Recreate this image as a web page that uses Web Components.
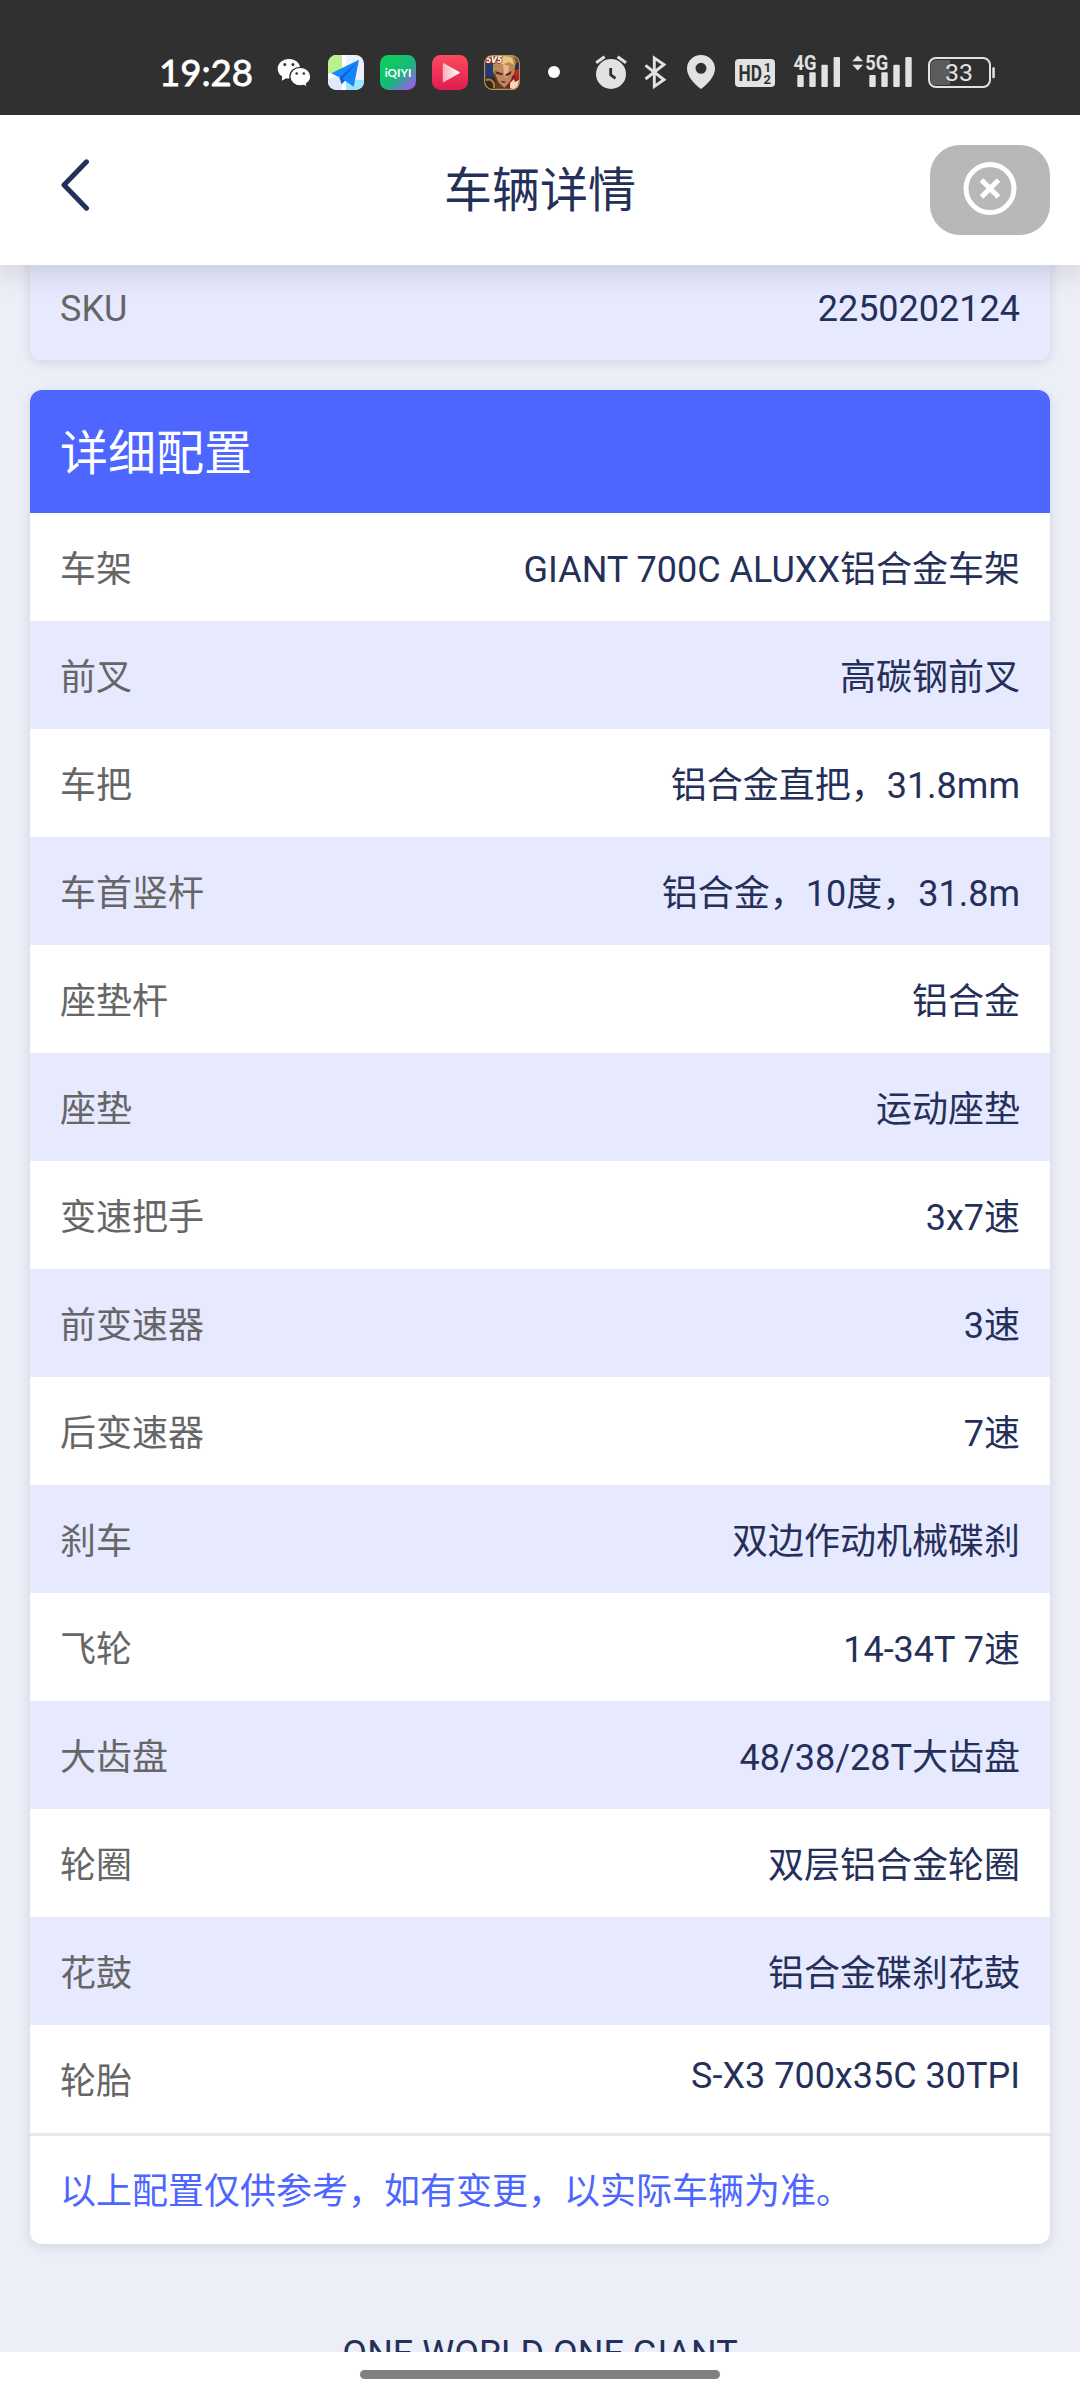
<!DOCTYPE html>
<html lang="zh-CN">
<head>
<meta charset="utf-8">
<title>车辆详情</title>
<style>
  html, body { margin: 0; padding: 0; }
  body { width: 1080px; height: 2400px; overflow: hidden; background: #fff;
         font-family: Roboto, 'Noto Sans CJK SC', sans-serif; }
</style>
</head>
<body>
<bike-page>
  <status-bar slot="status" time="19:28" battery="33"></status-bar>
  <nav-header slot="header">车辆详情</nav-header>

  <info-card class="first">
    <spec-row label="SKU" odd>2250202124</spec-row>
  </info-card>

  <info-card heading="详细配置">
    <spec-row label="车架">GIANT 700C ALUXX铝合金车架</spec-row>
    <spec-row label="前叉" odd>高碳钢前叉</spec-row>
    <spec-row label="车把">铝合金直把，31.8mm</spec-row>
    <spec-row label="车首竖杆" odd>铝合金，10度，31.8m</spec-row>
    <spec-row label="座垫杆">铝合金</spec-row>
    <spec-row label="座垫" odd>运动座垫</spec-row>
    <spec-row label="变速把手">3x7速</spec-row>
    <spec-row label="前变速器" odd>3速</spec-row>
    <spec-row label="后变速器">7速</spec-row>
    <spec-row label="刹车" odd>双边作动机械碟刹</spec-row>
    <spec-row label="飞轮">14-34T 7速</spec-row>
    <spec-row label="大齿盘" odd>48/38/28T大齿盘</spec-row>
    <spec-row label="轮圈">双层铝合金轮圈</spec-row>
    <spec-row label="花鼓" odd>铝合金碟刹花鼓</spec-row>
    <spec-row label="轮胎" latin>S-X3 700x35C 30TPI</spec-row>
    <span slot="note">以上配置仅供参考，如有变更，以实际车辆为准。</span>
  </info-card>

  <span slot="slogan">ONE WORLD ONE GIANT</span>
</bike-page>

<script>
// Page frame: status bar, header, clipped scroll area, gesture bar.
class BikePage extends HTMLElement {
  connectedCallback() {
    this.attachShadow({ mode: 'open' }).innerHTML = `
      <style>
        :host { display: flex; flex-direction: column; width: 1080px; height: 2400px; }
        main { flex: 1; min-height: 0; overflow: hidden; background: #eceff8;
               display: flex; flex-direction: column; gap: 30px; padding: 0 30px; }
        ::slotted(.first) { margin-top: -13px; }
        .slogan { margin-top: 59px; text-align: center; font-size: 36px; line-height: 42px;
                  color: #25305a; white-space: nowrap; }
        footer { height: 48px; flex: none; display: flex; justify-content: center; background: #fff; }
        footer i { width: 360px; height: 9px; margin-top: 18px; border-radius: 5px; background: #808080; }
      </style>
      <slot name="status"></slot>
      <slot name="header"></slot>
      <main>
        <slot></slot>
        <div class="slogan"><slot name="slogan"></slot></div>
      </main>
      <footer><i></i></footer>`;
  }
}

// Each icon: width, gap before it, and its drawing (all are 36px tall).
const ICONS = [
  { w: 34, gap: 24, svg: `
    <path fill="#fff" d="M12 4C5.600 4 .7 8.300 .7 13.800c0 3.200 1.700 5.900 4.500 7.700L4.800 25.800l4.500-2.500c4.500 1 14-1.500 14-9.500C23.300 8.300 18.400 4 12 4z"/>
    <path fill="#fff" stroke="#303030" stroke-width="1.300" d="M23.300 12.400c-5.800 0-10.400 4-10.400 9.200s4.600 9.300 10.400 9.300c1.200 0 2.400-.2 3.500-.5l3.500 2-.8-3.600c2.600-1.700 4.300-4.200 4.300-7.200 0-5.200-4.700-9.200-10.500-9.200z"/>
    <g fill="#303030"><circle cx="7.800" cy="9.500" r="1.500"/><circle cx="16" cy="9.500" r="1.500"/><circle cx="19.700" cy="18.500" r="1.300"/><circle cx="26.800" cy="18.500" r="1.300"/></g>` },
  { w: 36, gap: 17, svg: `
    <clipPath id="m"><rect width="36" height="35" rx="8.500"/></clipPath>
    <g clip-path="url(#m)">
      <rect width="36" height="36" fill="#eef1fd"/>
      <path fill="#bdf08c" d="M0 0h14v15L0 20z"/>
      <path fill="#fff" d="M14 0h4v36h-4zM0 19l14-5v6L0 24z"/>
      <path fill="#9be6ff" d="M18 25h18v11H18z"/>
      <path fill="#e2e8fb" d="M0 24l14-3v15H0z"/>
      <path fill="#128bfd" d="M31 4.700L3.200 18.200l9 4.500z"/>
      <path fill="#0a5ee0" d="M31 4.700L11.500 22.500l2 6.800 4.500-4.500z"/>
      <path fill="#1385fa" d="M31 4.700L14.500 24l11.200 7.700z"/>
    </g>` },
  { w: 36, gap: 16, svg: `
    <linearGradient id="q" x1=".25" y1=".2" x2="1" y2="1"><stop offset="0" stop-color="#10ca62"/><stop offset=".42" stop-color="#16b87a"/><stop offset=".75" stop-color="#7676d0"/><stop offset="1" stop-color="#bd45ff"/></linearGradient>
    <rect width="36" height="35" rx="8.500" fill="url(#q)"/>
    <text x="4.700" y="21.600" textLength="26.600" lengthAdjust="spacing" font-family="Lato" font-weight="700" font-size="11.500" fill="#fff">iQIYI</text>` },
  { w: 36, gap: 16, svg: `
    <linearGradient id="v" x2="0" y2="1"><stop stop-color="#fb4b5c"/><stop offset="1" stop-color="#e01c50"/></linearGradient>
    <linearGradient id="t"><stop stop-color="#fbb0bd"/><stop offset="1" stop-color="#fff"/></linearGradient>
    <rect width="36" height="35" rx="8.500" fill="url(#v)"/>
    <path fill="url(#t)" stroke="url(#t)" stroke-width="1.500" stroke-linejoin="round" d="M11.500 8.800v17.600L27 17.600z"/>` },
  { w: 36, gap: 16, svg: `
    <clipPath id="g"><rect width="36" height="35" rx="8.500"/></clipPath>
    <g clip-path="url(#g)">
      <rect width="36" height="36" fill="#70502f"/>
      <path fill="#273a70" d="M0 8h10v15H0z"/><path fill="#1d2c63" d="M29 8h7v8h-7z"/>
      <path fill="#8f1820" d="M27 14l9 1v21H21z"/><path fill="#bd2a25" d="M29 16l6-2-2 12z"/>
      <path fill="#3a2818" d="M0 24l10-3 7 15H0z"/>
      <path fill="#b98a4b" d="M9 9L17 1l12-1 3 7-2 12-4 5-3-10-8 1-2 6-4-4z"/>
      <path fill="#e6c883" d="M15 5l6-5 7 3 2 7-5-3-8 3z"/>
      <path fill="#c08660" d="M12 12l6-3 8 1 3 6-2 9-6 8-6-5-4-8z"/>
      <path fill="#e9b78c" d="M19 9l6 2-1 6-2 6-2-4z"/>
      <path fill="#552e22" d="M11 16l8 2.500-1 1.800-6-1.600zM21 19.500l7-3.500-1.500 3.500-4.500 1.500zM17 26l5 .6-2 1.400-3-1z"/>
      <path fill="#633824" d="M11 18l3 9 6 6 5-5-2 8H12z"/>
      <path fill="#f5d7bb" d="M26 28l4-4 1 3 4-2-1 8-4 2-4-2z"/>
      <path fill="none" stroke="#a98544" stroke-width="2" d="M2 25c6-2 9 3 8 8"/>
      <text x="2" y="7.600" textLength="16" lengthAdjust="spacingAndGlyphs" font-family="Roboto" font-weight="900" font-style="italic" font-size="9" fill="#fff" stroke="#9c2619" stroke-width="1.400" paint-order="stroke">5V5</text>
    </g>
    <rect x=".6" y=".6" width="34.800" height="33.800" rx="8" fill="none" stroke="#b99655" stroke-width="1.100"/>` },
  { w: 12, gap: 28, svg: `<circle cx="6" cy="17" r="6" fill="#fff"/>` },
  { w: 34, gap: 34, svg: `
    <circle cx="17" cy="19" r="15" fill="#e2e2e2"/>
    <path fill="none" stroke="#e2e2e2" stroke-width="3" d="M2.200 7.700l8.400-6M23.600 1.700l8.400 6"/>
    <path fill="none" stroke="#303030" stroke-width="2.800" d="M16.700 13v6.800l4.800 3.600"/>` },
  { w: 24, gap: 16, svg: `<path fill="none" stroke="#e2e2e2" stroke-width="2.900" d="M1.500 10.300L20 24.800 10.300 31.500V3l9.700 6.500L1.500 24"/>` },
  { w: 30, gap: 18, svg: `<path fill="#e2e2e2" fill-rule="evenodd" d="M15 0C7.200 0 1 6 1 13.600 1 21.500 8 29 15 34c7-5 14-12.500 14-20.400C29 6 22.800 0 15 0zm0 7.800a5.500 5.500 0 110 11 5.500 5.500 0 010-11z"/>` },
  { w: 42, gap: 18, svg: `
    <rect x="1" y="4" width="40" height="28" rx="4" fill="#e2e2e2"/>
    <g font-family="Roboto" font-weight="700" fill="#303030">
      <text x="4.600" y="25.600" textLength="23.500" lengthAdjust="spacingAndGlyphs" font-size="21.500">HD</text>
      <text x="29.800" y="17" font-size="13">1</text><text x="29.500" y="28.500" font-size="13">2</text>
    </g>` },
  { w: 48, gap: 17, svg: `
    <text x=".6" y="15.200" textLength="23" lengthAdjust="spacingAndGlyphs" font-family="Roboto" font-weight="700" font-size="21" fill="#e2e2e2">4G</text>
    <g fill="#e2e2e2"><rect x="4.300" y="20" width="6.400" height="12" rx="1"/><rect x="16.300" y="17.300" width="6.400" height="14.700" rx="1"/><rect x="28.400" y="9.800" width="6.400" height="22.200" rx="1"/><rect x="40.600" y="2" width="6.400" height="30" rx="1"/></g>` },
  { w: 60, gap: 11, svg: `
    <path fill="#e2e2e2" d="M.3 6.200L5.700.6l5.400 5.600zM.3 9.800h10.800l-5.400 5.600z"/>
    <text x="13.200" y="15.200" textLength="23" lengthAdjust="spacingAndGlyphs" font-family="Roboto" font-weight="700" font-size="21" fill="#e2e2e2">5G</text>
    <g fill="#e2e2e2"><rect x="17.300" y="20" width="6.400" height="12" rx="1"/><rect x="29.300" y="17.300" width="6.400" height="14.700" rx="1"/><rect x="41.300" y="9.800" width="6.400" height="22.200" rx="1"/><rect x="53.300" y="2" width="6.400" height="30" rx="1"/></g>` },
];

class StatusBar extends HTMLElement {
  connectedCallback() {
    const icon = (w, gap, svg) =>
      `<svg width="${w}" height="36" viewBox="0 0 ${w} 36" style="margin-left:${gap}px">${svg}</svg>`;
    const battery = `
      <path fill="#5c5c5c" d="M9 5h14v25H9a5.500 5.500 0 01-5.500-5.500v-14A5.500 5.500 0 019 5z"/>
      <rect x="2" y="3" width="61" height="29" rx="7" fill="none" stroke="#e2e2e2" stroke-width="2"/>
      <rect x="65.300" y="12.300" width="2.500" height="11" rx="1" fill="#e2e2e2"/>
      <text x="18" y="26.400" textLength="28" lengthAdjust="spacingAndGlyphs" font-family="Roboto" font-size="24.500" fill="#e2e2e2">${this.getAttribute('battery')}</text>`;
    const time = `<text x="-1" y="31" textLength="94" lengthAdjust="spacingAndGlyphs" font-family="Lato" font-weight="400" font-size="37.500" fill="#fff" stroke="#fff" stroke-width=".8">${this.getAttribute('time')}</text>`;
    this.attachShadow({ mode: 'open' }).innerHTML = `
      <style>
        :host { display: flex; flex: none; align-items: flex-start; box-sizing: border-box;
                height: 115px; padding: 55px 0 0 160px; background: #303030; }
        svg { flex: none; overflow: visible; }
      </style>
      ${icon(93, 0, time)}${ICONS.map(i => icon(i.w, i.gap, i.svg)).join('')}${icon(69, 15, battery)}`;
  }
}

class NavHeader extends HTMLElement {
  connectedCallback() {
    this.attachShadow({ mode: 'open' }).innerHTML = `
      <style>
        :host { display: grid; grid-template-columns: 1fr auto 1fr; align-items: center; flex: none;
                height: 150px; padding: 0 30px; background: #fff; z-index: 1;
                box-shadow: 0 0 36px rgba(0,0,0,0.2); clip-path: inset(0 0 -60px 0); }
        h1 { margin: 2px 0 0; font-size: 48px; line-height: 60px; font-weight: 400; color: #25305a; }
        .back { margin: -10px 0 0 30px; }
        .close { justify-self: end; display: flex; align-items: center; justify-content: center;
                 width: 120px; height: 90px; border-radius: 30px; background: #b8b8b8; }
      </style>
      <svg class="back" width="30" height="52" viewBox="0 0 30 52"><path fill="none" stroke="#25305a" stroke-width="5" stroke-linecap="round" stroke-linejoin="round" d="M26.500 2.800L4 26l22.500 23.200"/></svg>
      <h1><slot></slot></h1>
      <span class="close">
        <svg width="54" height="56" viewBox="0 0 54 56"><g fill="none" stroke="#fff" stroke-width="5"><circle cx="27" cy="26.500" r="24"/><path d="M18.500 18L35.500 35M35.500 18L18.500 35"/></g></svg>
      </span>`;
  }
}

class InfoCard extends HTMLElement {
  connectedCallback() {
    const heading = this.getAttribute('heading');
    this.attachShadow({ mode: 'open' }).innerHTML = `
      <style>
        :host { display: block; flex: none; border-radius: 12px; overflow: hidden; background: #fff;
                box-shadow: 0 3px 12px rgba(0,0,0,0.11); }
        h2 { margin: 0; height: 123px; padding: 0 30px; line-height: 127px; font-size: 48px;
             font-weight: 400; color: #fff; background: #4d66ff; }
        .note { height: 108px; padding: 0 30px; border-top: 3px solid #e8e8e8; line-height: 113px;
                font-size: 36px; color: #4d66ff; }
      </style>
      ${heading ? `<h2>${heading}</h2>` : ''}
      <slot></slot>
      ${heading ? '<div class="note"><slot name="note"></slot></div>' : ''}`;
  }
}

class SpecRow extends HTMLElement {
  connectedCallback() {
    this.attachShadow({ mode: 'open' }).innerHTML = `
      <style>
        :host { display: flex; justify-content: space-between; align-items: flex-start;
                box-sizing: border-box; height: 108px; padding: 33px 30px 0;
                font-size: 36px; line-height: 48px; background: #fff; }
        :host([odd]) { background: #e7e9ff; }
        .label { color: #666; }
        .value { color: #25305a; white-space: nowrap; }
        :host([latin]) .value { line-height: 36px; }
      </style>
      <span class="label">${this.getAttribute('label')}</span>
      <span class="value"><slot></slot></span>`;
  }
}

customElements.define('bike-page', BikePage);
customElements.define('status-bar', StatusBar);
customElements.define('nav-header', NavHeader);
customElements.define('info-card', InfoCard);
customElements.define('spec-row', SpecRow);
</script>
</body>
</html>
